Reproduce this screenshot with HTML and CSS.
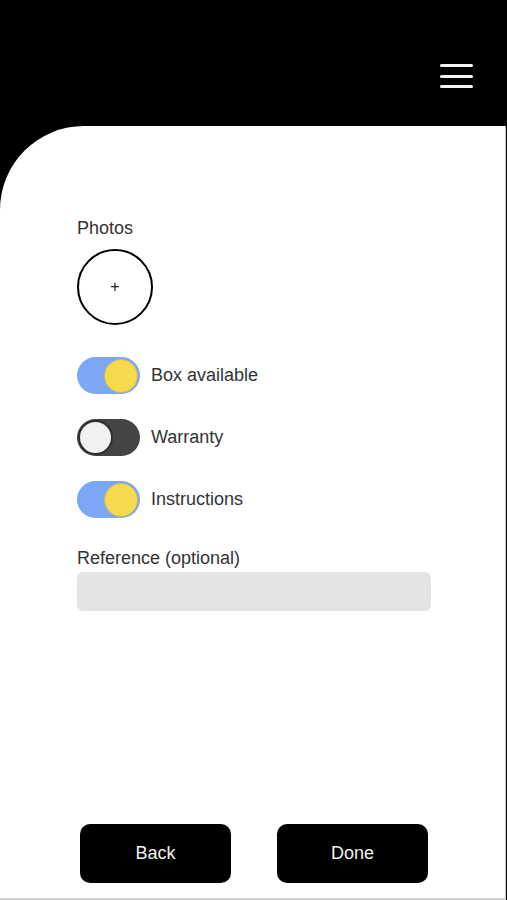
FILE: index.html
```html
<!DOCTYPE html>
<html lang="en">
<head>
<meta charset="utf-8">
<title>Item details</title>
<link rel="stylesheet" href="styles.css">
</head>
<body>
<div class="app">
  <header class="topbar">
    <button class="menu" aria-label="Menu">
      <span class="bar"></span>
      <span class="bar"></span>
      <span class="bar"></span>
    </button>
  </header>
  <main class="panel">
    <section class="form">
      <div class="label">Photos</div>
      <button class="photo-add" aria-label="Add photo">+</button>

      <div class="toggles">
        <label class="toggle-row">
          <span class="switch on"><span class="knob"></span></span>
          <span class="toggle-text">Box available</span>
        </label>
        <label class="toggle-row">
          <span class="switch off"><span class="knob"></span></span>
          <span class="toggle-text">Warranty</span>
        </label>
        <label class="toggle-row">
          <span class="switch on"><span class="knob"></span></span>
          <span class="toggle-text">Instructions</span>
        </label>
      </div>

      <div class="label ref-label">Reference (optional)</div>
      <div class="input"></div>
    </section>

    <footer class="actions">
      <button class="btn btn-back">Back</button>
      <button class="btn btn-done">Done</button>
    </footer>
  </main>
</div>
</body>
</html>
```

FILE: styles.css
```css
* { box-sizing: border-box; }

html, body {
  margin: 0;
  padding: 0;
  background: #fff;
}

body {
  font-family: "Liberation Sans", Arial, sans-serif;
  color: #333;
}

.app {
  width: 507px;
  height: 900px;
  background: #000;
  display: flex;
  flex-direction: column;
}

.topbar {
  height: 126px;
  flex: none;
  display: flex;
  justify-content: flex-end;
  align-items: flex-start;
  padding: 64px 34px 0 0;
}

.menu {
  width: 33px;
  height: 24px;
  padding: 0;
  border: 0;
  background: transparent;
  display: flex;
  flex-direction: column;
  justify-content: space-between;
}

.bar {
  display: block;
  height: 3px;
  width: 100%;
  background: #f4f4f4;
  border-radius: 2px;
}

.panel {
  flex: 1;
  background: #fff;
  border-top-left-radius: 84px;
  border-right: 1px solid #c4c4c4;
  border-bottom: 2px solid #d0d0d0;
  margin-right: 1px;
  display: flex;
  flex-direction: column;
  justify-content: space-between;
}

.form {
  padding: 92px 0 0 77px;
  display: flex;
  flex-direction: column;
  align-items: flex-start;
}

.label {
  font-size: 18px;
  line-height: 21px;
  color: #333;
}

.photo-add {
  margin-top: 10px;
  width: 76px;
  height: 76px;
  border: 2px solid #000;
  border-radius: 50%;
  background: #fff;
  font-family: "Liberation Sans", Arial, sans-serif;
  font-size: 16px;
  color: #222;
  padding: 0;
  display: flex;
  align-items: center;
  justify-content: center;
}

.toggles {
  margin-top: 32px;
  display: flex;
  flex-direction: column;
  gap: 25px;
}

.toggle-row {
  display: flex;
  align-items: center;
  gap: 11px;
}

.switch {
  width: 63px;
  height: 37px;
  border-radius: 19px;
  display: flex;
  align-items: center;
  padding: 0 2px;
}

.switch.on {
  background: #7ba7f6;
  justify-content: flex-end;
}

.switch.off {
  background: #444;
  justify-content: flex-start;
  padding: 0 1px;
}

.knob {
  width: 34px;
  height: 34px;
  border-radius: 50%;
}

.switch.on .knob {
  background: #f6d94c;
  border: 1px solid #c9b86a;
}

.switch.off .knob {
  width: 35px;
  height: 35px;
  background: #f1f1f1;
  border: 2px solid #2e2e2e;
}

.toggle-text {
  font-size: 18px;
  line-height: 21px;
  color: #333;
}

.ref-label {
  margin-top: 30px;
}

.input {
  margin-top: 3px;
  width: 354px;
  height: 39px;
  background: #e4e4e4;
  border-radius: 6px;
}

.actions {
  display: flex;
  padding: 0 0 15px 80px;
  gap: 46px;
}

.btn {
  width: 151px;
  height: 59px;
  background: #000;
  color: #f2f2f2;
  border: 0;
  border-radius: 10px;
  font-family: "Liberation Sans", Arial, sans-serif;
  font-size: 18px;
}
```
